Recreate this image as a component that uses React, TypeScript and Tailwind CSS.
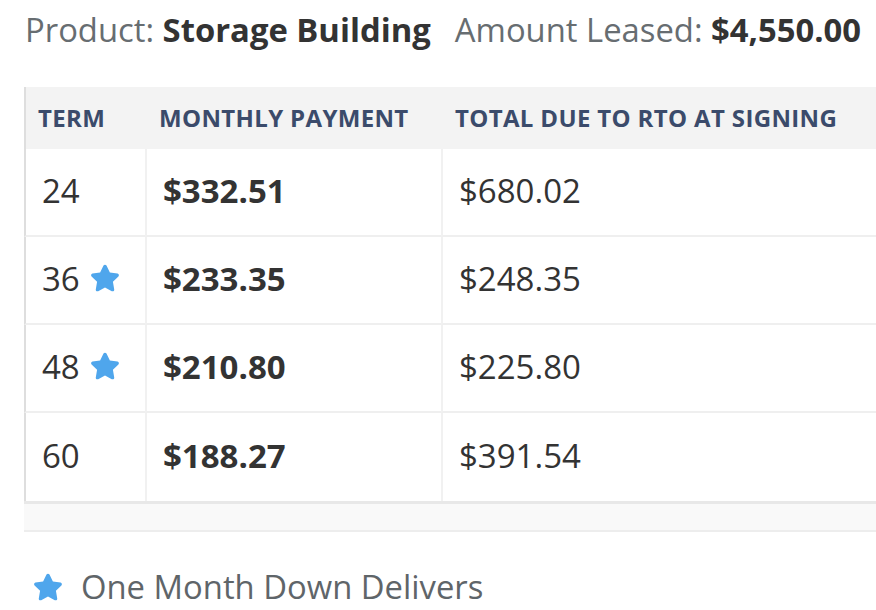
import React from "react";

const Star = ({ className = "" }: { className?: string }) => (
    <svg viewBox="0 0 576 512" className={className} fill="currentColor">
        <path d="M259.3 17.8L194 150.2 47.9 171.5c-26.2 3.8-36.7 36.1-17.7 54.6l105.7 103-25 145.5c-4.5 26.3 23.2 46 46.4 33.7L288 439.6l130.7 68.7c23.2 12.2 50.9-7.4 46.4-33.7l-25-145.5 105.7-103c19-18.5 8.5-50.8-17.7-54.6L382 150.2 316.7 17.8c-11.7-23.6-45.6-23.9-57.4 0z" />
    </svg>
);

const App = () => {
    const rows = [
        { term: "24", star: false, monthly: "$332.51", due: "$680.02" },
        { term: "36", star: true, monthly: "$233.35", due: "$248.35" },
        { term: "48", star: true, monthly: "$210.80", due: "$225.80" },
        { term: "60", star: false, monthly: "$188.27", due: "$391.54" },
    ];

    return (
        <div className="w-[876px] h-[610px] overflow-hidden bg-white font-['Open_Sans',sans-serif]">
            <div className="pt-[14px] pl-[25px] text-[32.8px] leading-none whitespace-nowrap">
                <span className="text-[#676d71]">Product: </span>
                <span className="font-bold text-[#333]">Storage Building</span>
                <span className="ml-[24px] text-[#676d71]">Amount Leased: </span>
                <span className="font-bold text-[#333]">$4,550.00</span>
            </div>

            <div className="ml-[24px] mt-[40px] w-[852px]">
                <table className="w-full border-separate border-spacing-0 text-[#333]">
                    <thead>
                        <tr className="bg-[#f3f3f3] text-[#3b4b6b] text-[24px] font-bold uppercase tracking-[0.35px]">
                            <th className="h-[62px] w-[121px] border-l-2 border-[#dedede] pl-[12px] text-left font-bold">
                                Term
                            </th>
                            <th className="w-[296px] pl-[14px] text-left font-bold">Monthly Payment</th>
                            <th className="pl-[14px] text-left font-bold">Total Due to RTO at Signing</th>
                        </tr>
                    </thead>
                    <tbody className="text-[33px]">
                        {rows.map((row, i) => {
                            const last = i === rows.length - 1;
                            const line = last ? "" : "border-b-2 border-b-[#efefef]";
                            return (
                                <tr key={row.term}>
                                    <td className={`h-[88px] border-l-2 border-l-[#dedede] pl-[16px] pb-[3px] ${line}`}>
                                        <span className="flex items-center gap-[10px]">
                                            {row.term}
                                            {row.star && <Star className="w-[30px] h-[30px] text-[#4fa6ec]" />}
                                        </span>
                                    </td>
                                    <td className={`border-l-2 border-l-[#f1f1f1] pl-[16px] pb-[3px] font-bold ${line}`}>
                                        {row.monthly}
                                    </td>
                                    <td className={`border-l-2 border-l-[#f1f1f1] pl-[16px] pb-[3px] ${line}`}>{row.due}</td>
                                </tr>
                            );
                        })}
                    </tbody>
                </table>
                <div className="h-[31px] bg-[#f9f9f9] border-t-[3px] border-t-[#e8e8e8] border-b-2 border-b-[#ededed]" />
            </div>

            <div className="mt-[39px] pl-[33px] flex items-center gap-[18px] text-[32.8px] leading-none text-[#5f6569]">
                <Star className="w-[30px] h-[30px] text-[#4fa6ec]" />
                <span>One Month Down Delivers</span>
            </div>
        </div>
    );
};

export default App;
